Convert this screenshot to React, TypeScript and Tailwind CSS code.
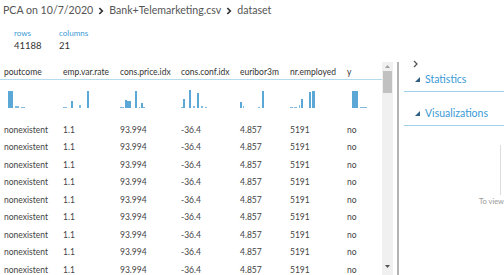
import React from "react";

const font = { fontFamily: 'Lato, "Segoe UI", sans-serif' };

type Bar = [number, number, number];

const columns: { name: string; w: string; value: string; bars: Bar[] }[] = [
  { name: "poutcome", w: "w-[59px]", value: "nonexistent", bars: [[4, 5, 17], [11, 4, 2], [17, 4, 1]] },
  { name: "emp.var.rate", w: "w-[57px]", value: "1.1", bars: [[0, 4, 1], [8, 2, 7], [16, 2, 3], [24, 2, 17]] },
  {
    name: "cons.price.idx",
    w: "w-[61px]",
    value: "93.994",
    bars: [[0, 4, 1], [5, 2, 8], [7, 2, 7], [9, 2, 7], [15, 2, 17], [19, 1, 1], [21, 2, 5], [23, 2, 1]],
  },
  {
    name: "cons.conf.idx",
    w: "w-[59px]",
    value: "-36.4",
    bars: [[0, 2, 1], [2, 2, 9], [8, 2, 18], [12, 2, 2], [16, 2, 15], [20, 2, 2], [24, 2, 1]],
  },
  { name: "euribor3m", w: "w-[50px]", value: "4.857", bars: [[0, 2, 6], [3, 1, 2], [18, 2, 1], [22, 2, 17]] },
  {
    name: "nr.employed",
    w: "w-[57px]",
    value: "5191",
    bars: [[0, 3, 1], [4, 3, 1], [9, 1, 3], [11, 2, 9], [19, 2, 16], [22, 3, 17]],
  },
  { name: "y", w: "w-[36px]", value: "no", bars: [[5, 6, 17], [13, 7, 1]] },
];

function Histogram({ bars }: { bars: Bar[] }) {
  return (
    <svg width="40" height="18" viewBox="0 0 40 18">
      {bars.map(([x, w, h], i) => (
        <rect key={i} x={x} y={18 - h} width={w} height={h} fill={h > 4 ? "#5ba7d6" : "#7fbbe0"} />
      ))}
    </svg>
  );
}

function Crumb() {
  return (
    <svg width="6" height="8" viewBox="0 0 6 8" className="mx-[5px]">
      <path d="M1.3 1 L4.3 4 L1.3 7" stroke="#333" strokeWidth="1.7" fill="none" />
    </svg>
  );
}

function Section({ title, h }: { title: string; h: string }) {
  return (
    <div className={`${h} flex items-end border-b border-[#9fd0ec] ml-[5px] pb-[6px]`}>
      <div className="flex items-center h-[12px] pl-[11px] gap-[5px]">
        <svg width="5" height="5" viewBox="0 0 5 5">
          <path d="M5 0 L5 5 L0 5 Z" fill="#2f5f85" />
        </svg>
        <span className="text-[10.5px] text-[#3b9ad6] leading-none">{title}</span>
      </div>
    </div>
  );
}

export default function App() {
  const rows = Array.from({ length: 9 });
  return (
    <div className="w-[504px] h-[275px] overflow-hidden bg-white flex flex-col text-[#444]" style={font}>
      {/* breadcrumb */}
      <div className="h-[21px] flex items-center pl-[3px] text-[10.6px] text-[#555] leading-none whitespace-nowrap">
        <span>PCA on 10/7/2020</span>
        <Crumb />
        <span>Bank+Telemarketing.csv</span>
        <Crumb />
        <span>dataset</span>
      </div>

      {/* counts */}
      <div className="h-[41px] flex gap-[20px] pl-[14px] pt-[7px]">
        <div className="flex flex-col w-[25px]">
          <span className="text-[8px] text-[#3b9ad6] leading-[11px]">rows</span>
          <span className="text-[9.5px] text-[#333] leading-[13px]">41188</span>
        </div>
        <div className="flex flex-col">
          <span className="text-[8px] text-[#3b9ad6] leading-[11px]">columns</span>
          <span className="text-[9.5px] text-[#333] leading-[13px]">21</span>
        </div>
      </div>

      <div className="flex flex-1 min-h-0">
        {/* table */}
        <div className="w-[382px] flex flex-col">
          <div className="h-[19px] flex items-center pt-[4px] pl-[4px] border-b border-[#b5dbef] text-[8.5px] text-[#333]">
            {columns.map((c) => (
              <div key={c.name} className={`${c.w} shrink-0`}>
                {c.name}
              </div>
            ))}
          </div>
          <div className="h-[40px] flex pl-[4px] pt-[10px] shrink-0">
            {columns.map((c) => (
              <div key={c.name} className={`${c.w} shrink-0`}>
                <Histogram bars={c.bars} />
              </div>
            ))}
          </div>
          {rows.map((_, i) => (
            <div key={i} className="h-[17.5px] flex items-center pt-[3px] pl-[4px] text-[8.5px] text-[#444] shrink-0">
              {columns.map((c) => (
                <div key={c.name} className={`${c.w} shrink-0`}>
                  {c.value}
                </div>
              ))}
            </div>
          ))}
          <div className="border-t border-[#e6e6e6]" />
        </div>

        {/* scrollbar */}
        <div className="w-[11px] bg-[#f0f0f0] flex flex-col items-center justify-between py-[3px]">
          <div className="flex flex-col items-center w-full">
            <svg width="5" height="3" viewBox="0 0 5 3">
              <path d="M0 3 L2.5 0 L5 3 Z" fill="#a0a0a0" />
            </svg>
            <div className="w-[9px] h-[22px] bg-[#c1c1c1] mt-[3px]" />
          </div>
          <svg width="5" height="3" viewBox="0 0 5 3" className="mb-[4px]">
            <path d="M0 0 L2.5 3 L5 0 Z" fill="#555" />
          </svg>
        </div>

        <div className="w-[4px]" />
        <div className="w-[2px] bg-[#b3b3b3]" />

        {/* right panel */}
        <div className="flex-1 flex flex-col">
          <div className="h-[0px] relative">
            <svg width="6" height="8" viewBox="0 0 6 8" className="absolute left-[14px] top-[-2px]">
              <path d="M1 1 L4 4 L1 7" stroke="#555" strokeWidth="1.3" fill="none" />
            </svg>
          </div>
          <Section title="Statistics" h="h-[30px]" />
          <Section title="Visualizations" h="h-[34px]" />
          <div className="flex justify-end pt-[19px] pr-[3px]">
            <div className="w-[1px] h-[50px] bg-[#dcdcdc]" />
          </div>
          <div className="text-[7.5px] text-[#999] pl-[80px] leading-none pt-[3px] whitespace-nowrap">To view</div>
        </div>
      </div>
    </div>
  );
}
